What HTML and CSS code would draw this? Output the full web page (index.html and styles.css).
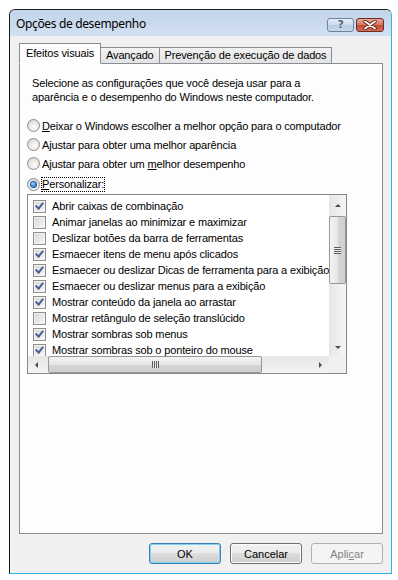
FILE: index.html
```html
<!DOCTYPE html>
<html lang="pt-BR">
<head>
    <meta charset="UTF-8">
    <title>Opções de desempenho</title>
    <link rel="stylesheet" href="styles.css">
</head>
<body>
    <div class="window">
        <div class="titlebar">
            <span class="title">Opções de desempenho</span>
            <div class="caption-btns">
                <span class="cap-btn help">?</span>
                <span class="cap-btn close">
                    <svg viewBox="0 0 14 10" width="14" height="10">
                        <path d="M2 1.5 L12 8.5 M12 1.5 L2 8.5" stroke="#5a1c12" stroke-width="3.4" stroke-linecap="round"/>
                        <path d="M2 1.5 L12 8.5 M12 1.5 L2 8.5" stroke="#fff" stroke-width="1.8" stroke-linecap="round"/>
                    </svg>
                </span>
            </div>
        </div>

        <div class="client">
            <div class="tabs">
                <div class="tab active">Efeitos visuais</div>
                <div class="tab">Avançado</div>
                <div class="tab">Prevenção de execução de dados</div>
            </div>

            <div class="panel">
                <p class="intro">Selecione as configurações que você deseja usar para a<br>aparência e o desempenho do Windows neste computador.</p>

                <div class="options">
                    <div class="option"><span class="radio"></span><span><u>D</u>eixar o Windows escolher a melhor opção para o computador</span></div>
                    <div class="option"><span class="radio"></span><span>A<u>j</u>ustar para obter uma melhor aparência</span></div>
                    <div class="option"><span class="radio"></span><span>Ajustar para obter um <u>m</u>elhor desempenho</span></div>
                    <div class="option last"><span class="radio checked"></span><span class="focus"><u>P</u>ersonalizar:</span></div>
                </div>

                <div class="listbox">
                    <div class="list-main">
                        <div class="rows">
                            <div class="row"><span class="check on"></span>Abrir caixas de combinação</div>
                            <div class="row"><span class="check"></span>Animar janelas ao minimizar e maximizar</div>
                            <div class="row"><span class="check"></span>Deslizar botões da barra de ferramentas</div>
                            <div class="row"><span class="check on"></span>Esmaecer itens de menu após clicados</div>
                            <div class="row"><span class="check on"></span>Esmaecer ou deslizar Dicas de ferramenta para a exibição</div>
                            <div class="row"><span class="check on"></span>Esmaecer ou deslizar menus para a exibição</div>
                            <div class="row"><span class="check on"></span>Mostrar conteúdo da janela ao arrastar</div>
                            <div class="row"><span class="check"></span>Mostrar retângulo de seleção translúcido</div>
                            <div class="row"><span class="check on"></span>Mostrar sombras sob menus</div>
                            <div class="row"><span class="check on"></span>Mostrar sombras sob o ponteiro do mouse</div>
                        </div>
                        <div class="vscroll">
                            <div class="sb-btn"><span class="arrow up"></span></div>
                            <div class="sb-track v">
                                <div class="thumb v"><span class="grip v"></span></div>
                            </div>
                            <div class="sb-btn"><span class="arrow down"></span></div>
                        </div>
                    </div>
                    <div class="hscroll">
                        <div class="sb-btn"><span class="arrow left"></span></div>
                        <div class="sb-track h">
                            <div class="thumb h"><span class="grip h"></span></div>
                        </div>
                        <div class="sb-btn"><span class="arrow right"></span></div>
                        <div class="sb-corner"></div>
                    </div>
                </div>
            </div>

            <div class="buttons">
                <button class="btn default">OK</button>
                <button class="btn">Cancelar</button>
                <button class="btn disabled">Apli<u>c</u>ar</button>
            </div>
        </div>
    </div>
</body>
</html>
```

FILE: styles.css
```css
:root {
    --face: #f0f0f0;
    --line: #898c95;
    --panel: #fdfdfd;
    --text: #000;
}
body {
    margin: 0;
    background: #fff;
    font-family: "Liberation Sans", Arial, sans-serif;
    font-size: 11px;
    letter-spacing: -0.15px;
    color: var(--text);
}
.window {
    width: 383px;
    height: 565px;
    margin: 9px 0 0 9px;
    box-sizing: border-box;
    border: 1px solid #1b1b1b;
    border-right-color: #34b4e4;
    border-bottom-color: #34b4e4;
    border-radius: 6px 6px 0 0;
    background: var(--face);
    display: flex;
    flex-direction: column;
    overflow: hidden;
}
.titlebar {
    height: 26px;
    flex: none;
    display: flex;
    align-items: center;
    justify-content: space-between;
    padding: 0 7px 0 6px;
    background: linear-gradient(#c2d4ea, #d2e0f1);
}
.title {
    font-family: "Noto Sans", "Open Sans", sans-serif;
    font-size: 12px;
    letter-spacing: -0.35px;
    color: #000;
}
.caption-btns {
    display: flex;
    gap: 2px;
    margin-top: 3px;
}
.cap-btn {
    width: 27px;
    height: 14px;
    box-sizing: border-box;
    border: 1px solid #6f82a0;
    border-radius: 3px;
    display: flex;
    align-items: center;
    justify-content: center;
}
.cap-btn.help {
    background: linear-gradient(#e6eef8 0%, #ccdaec 50%, #b9cbe2 51%, #c9d8eb 100%);
    font-family: "DejaVu Sans", sans-serif;
    font-size: 11px;
    font-weight: bold;
    color: #4e6079;
    line-height: 12px;
    text-shadow: 0 0 1px #fff;
}
.cap-btn.close {
    width: 28px;
    border-color: #6e2a20;
    background: linear-gradient(#e8a899 0%, #d57a66 48%, #c24a33 52%, #d56f58 100%);
}
.client {
    flex: 1;
    display: flex;
    flex-direction: column;
    padding: 7px 8px 0 9px;
}
.tabs {
    display: flex;
    align-items: flex-end;
    height: 21px;
    margin-bottom: -1px;
    position: relative;
    z-index: 1;
}
.tab {
    height: 17px;
    box-sizing: border-box;
    padding: 0 5px;
    margin-left: -1px;
    border: 1px solid var(--line);
    background: linear-gradient(#f2f2f2, #e3e3e3);
    line-height: 15px;
}
.tab.active {
    height: 21px;
    margin-left: 0;
    padding: 0 6px;
    border-bottom-color: var(--panel);
    background: var(--panel);
    line-height: 19px;
    position: relative;
    z-index: 2;
}
.panel {
    flex: 1;
    border: 1px solid var(--line);
    background: var(--panel);
}
.intro {
    margin: 12px 0 0 12px;
    line-height: 14px;
}
.options {
    margin: 12px 0 0 7px;
}
.option {
    height: 19px;
    display: flex;
    align-items: center;
    gap: 2px;
}
.option.last {
    height: 21px;
    padding-top: 1px;
    box-sizing: border-box;
}
.radio {
    width: 13px;
    height: 13px;
    box-sizing: border-box;
    border-radius: 50%;
    border: 1px solid #8d8d8d;
    background: radial-gradient(circle at 60% 65%, #fdfdfd 0%, #e4e4e4 55%, #cdcdcd 100%);
    display: flex;
    align-items: center;
    justify-content: center;
}
.radio.checked::after {
    content: "";
    width: 5px;
    height: 5px;
    border-radius: 50%;
    background: radial-gradient(circle at 40% 35%, #a9dcff 0%, #2a7bc9 60%, #0f3e7a 100%);
    box-shadow: 0 0 0 1px #1e5796;
}
.focus {
    outline: 1px dotted #000;
    outline-offset: 0;
    line-height: 13px;
}
.listbox {
    width: 320px;
    height: 180px;
    box-sizing: border-box;
    margin: 0 0 0 7px;
    border: 1px solid #828790;
    background: #fff;
    display: flex;
    flex-direction: column;
}
.list-main {
    flex: 1;
    display: flex;
    min-height: 0;
}
.rows {
    flex: 1;
    padding: 3px 0 0 5px;
    overflow: hidden;
}
.row {
    height: 16px;
    display: flex;
    align-items: center;
    gap: 6px;
    white-space: nowrap;
}
.check {
    width: 13px;
    height: 13px;
    flex: none;
    box-sizing: border-box;
    border: 1px solid #8e8f8f;
    box-shadow: inset 0 0 0 1px #f4f4f4;
    background: linear-gradient(135deg, #d6d6d6, #f8f8f8);
    display: flex;
    align-items: center;
    justify-content: center;
}
.check.on::after {
    content: "";
    width: 3px;
    height: 6px;
    margin-top: -2px;
    border: solid #4a5f97;
    border-width: 0 2px 2px 0;
    transform: rotate(40deg);
}
.vscroll {
    width: 17px;
    display: flex;
    flex-direction: column;
    background: linear-gradient(90deg, #e6e6e6, #f4f4f4);
}
.hscroll {
    height: 17px;
    flex: none;
    display: flex;
    background: linear-gradient(#e6e6e6, #f4f4f4);
}
.sb-btn {
    width: 17px;
    height: 17px;
    flex: none;
    display: flex;
    align-items: center;
    justify-content: center;
}
.sb-track {
    flex: 1;
    display: flex;
}
.sb-track.v {
    flex-direction: column;
}
.sb-corner {
    width: 17px;
    background: var(--face);
}
.thumb {
    box-sizing: border-box;
    border: 1px solid #979797;
    border-radius: 2px;
    display: flex;
    align-items: center;
    justify-content: center;
}
.thumb.v {
    height: 68px;
    margin: 4px 0 0 0;
    background: linear-gradient(90deg, #f4f4f4, #e6e6e6 50%, #d4d4d4 51%, #cfcfcf);
}
.thumb.h {
    width: 214px;
    margin: 0 0 0 3px;
    background: linear-gradient(#f4f4f4, #e6e6e6 50%, #d4d4d4 51%, #cfcfcf);
}
.grip.v {
    width: 7px;
    height: 7px;
    background: repeating-linear-gradient(#5e5e5e 0 1px, #ececec 1px 2px);
}
.grip.h {
    width: 7px;
    height: 7px;
    background: repeating-linear-gradient(90deg, #5e5e5e 0 1px, #ececec 1px 2px);
}
.arrow {
    width: 0;
    height: 0;
    border: 3px solid transparent;
}
.arrow.up {
    border-bottom: 3px solid #4d4d4d;
    border-top-width: 0;
    margin-top: 4px;
}
.arrow.down {
    border-top: 3px solid #4d4d4d;
    border-bottom-width: 0;
}
.arrow.left {
    border-right: 3px solid #4d4d4d;
    border-left-width: 0;
}
.arrow.right {
    border-left: 3px solid #4d4d4d;
    border-right-width: 0;
}
.buttons {
    display: flex;
    justify-content: flex-end;
    gap: 9px;
    padding: 9px 0;
}
.btn {
    width: 72px;
    height: 21px;
    box-sizing: border-box;
    border: 1px solid #707070;
    border-radius: 3px;
    background: linear-gradient(#f2f2f2 0%, #ebebeb 49%, #dddddd 50%, #cfcfcf 100%);
    box-shadow: inset 0 0 0 1px #fbfbfb;
    font-family: "Liberation Sans", Arial, sans-serif;
    font-size: 11px;
    color: #000;
    padding: 0;
}
.btn.default {
    border-color: #3c7fb1;
    box-shadow: inset 0 0 0 1px #7fd3f4;
}
.btn.disabled {
    border-color: #adb2b5;
    background: #f4f4f4;
    box-shadow: none;
    color: #838383;
}
```
